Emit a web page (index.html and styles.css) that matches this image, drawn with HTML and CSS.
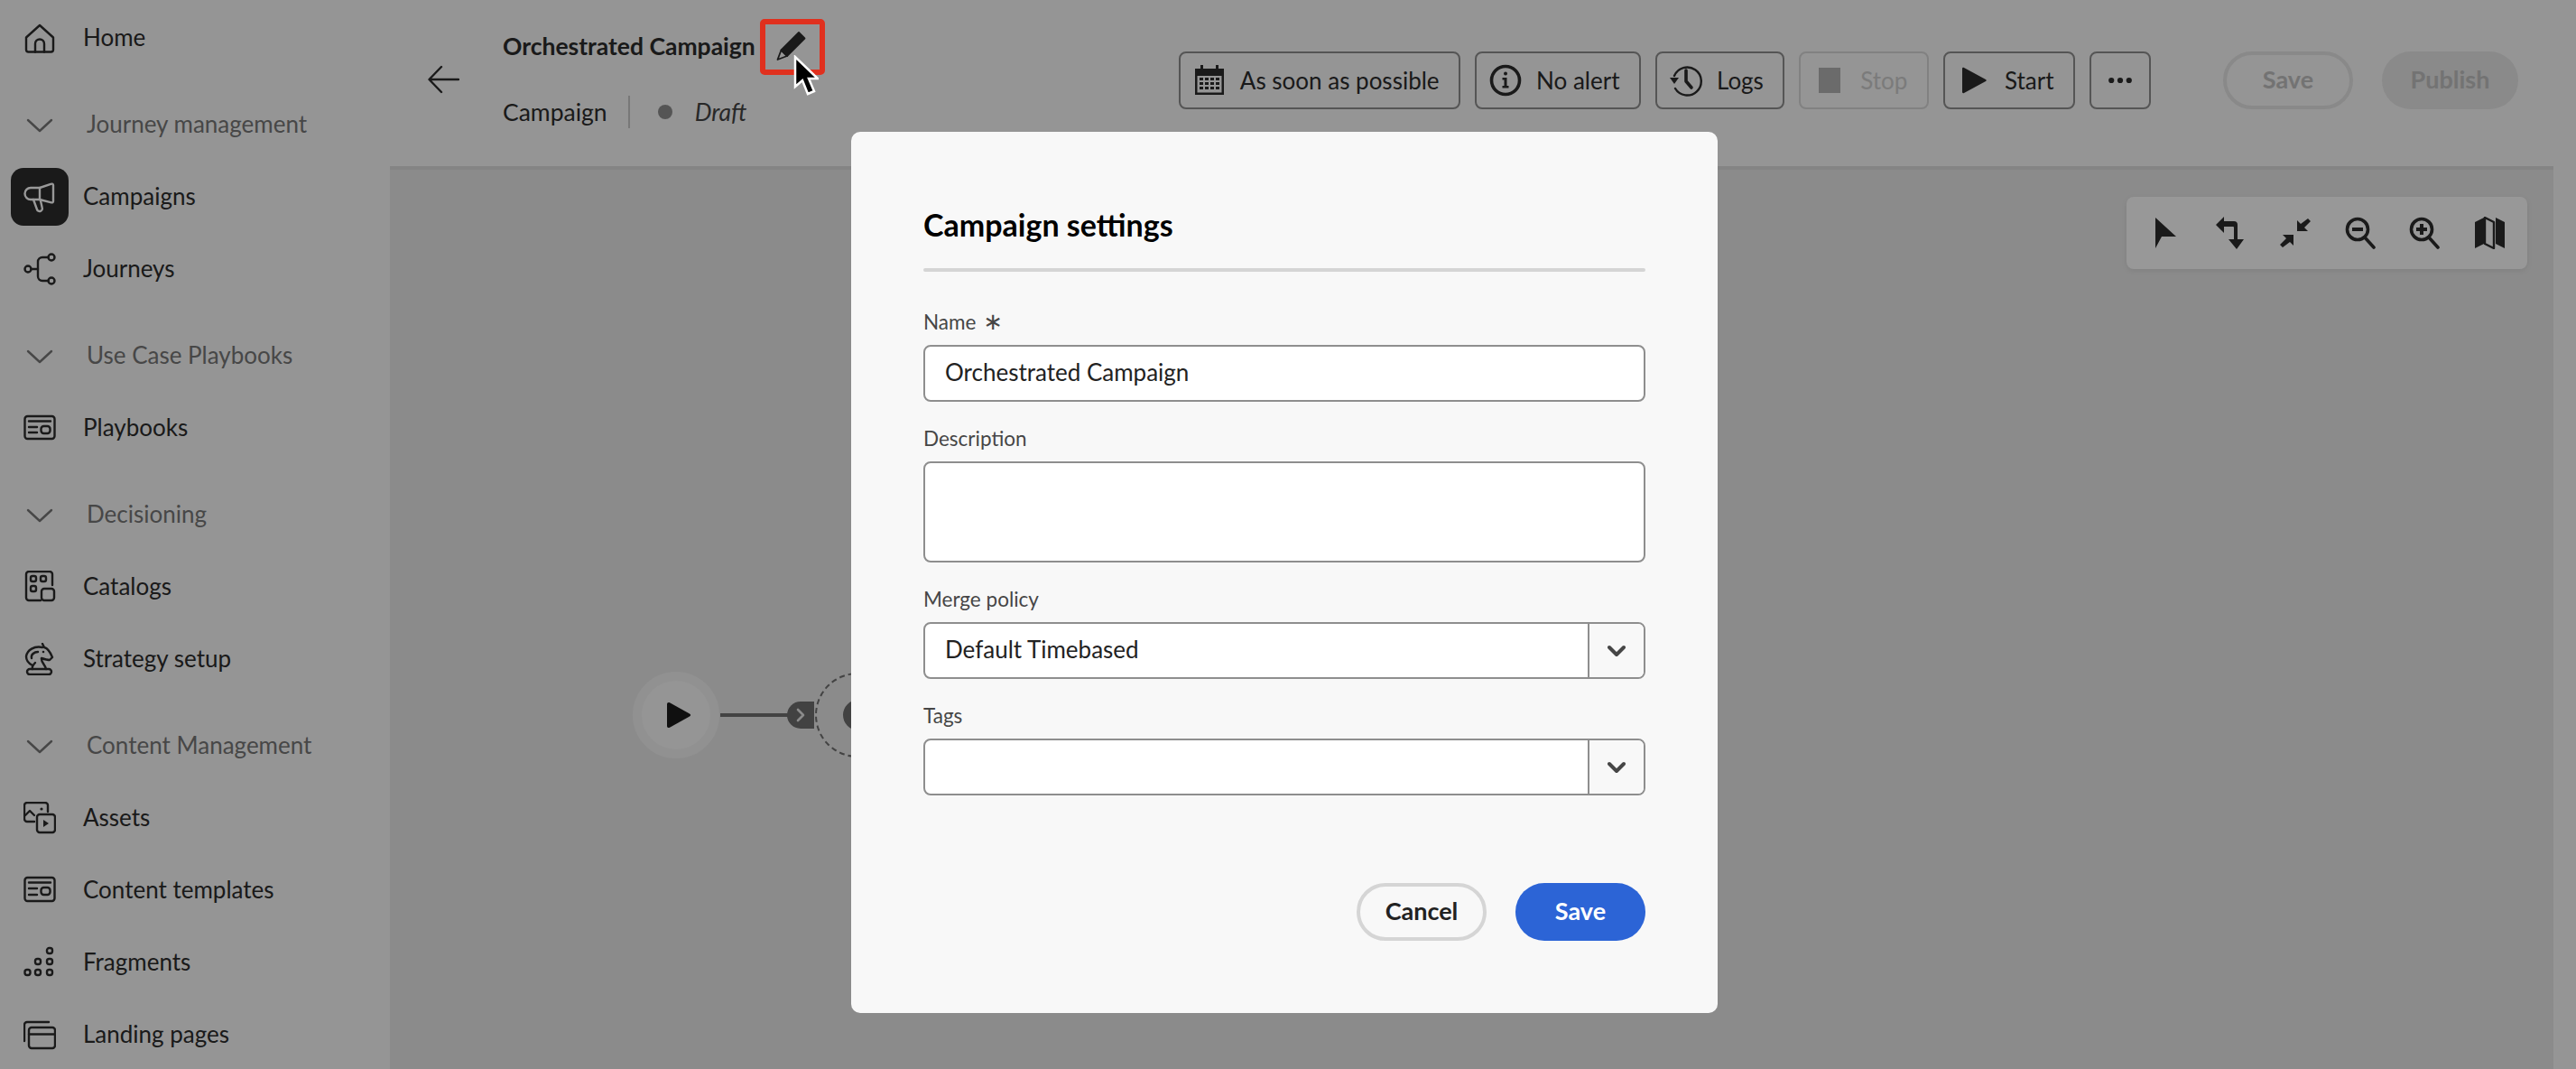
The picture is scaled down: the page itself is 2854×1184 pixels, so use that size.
FILE: index.html
```html
<!DOCTYPE html>
<html lang="en">
<head>
  <meta charset="UTF-8" />
  <meta name="viewport" content="width=device-width, initial-scale=1.0" />
  <title>Campaign settings</title>
  <link rel="stylesheet" href="styles.css">
</head>
<body>
  <div class="app">
    <nav class="sidebar">
      <a class="nav-item">
        <span class="nav-icon"><svg viewBox="0 0 36 36"><path d="M3 17.500 18 4l15 13.500V31a2.500 2.500 0 0 1-2.500 2.500h-25A2.500 2.500 0 0 1 3 31Z"/><path d="M13 33.500V24.500a5 5 0 0 1 10 0v9"/></svg></span>
        <span class="nav-label">Home</span>
      </a>

      <div class="nav-heading">
        <span class="nav-icon"><svg viewBox="0 0 36 36"><path d="M5 13l13 12 13-12"/></svg></span>
        <span class="nav-label">Journey management</span>
      </div>
      <a class="nav-item active">
        <span class="nav-icon"><svg viewBox="0 0 36 36"><path d="M33 5v18a1.500 1.500 0 0 1-2 1.300L18 21H8a6.500 6.500 0 0 1 0-13h10l13-4.300A1.500 1.500 0 0 1 33 5Z"/><path d="M18 8v13"/><path d="M11 21l4 11a3 3 0 0 0 5.700-2l-1.900-8.500"/></svg></span>
        <span class="nav-label">Campaigns</span>
      </a>
      <a class="nav-item">
        <span class="nav-icon"><svg viewBox="0 0 36 36"><circle cx="5" cy="18" r="3.500"/><circle cx="31" cy="5" r="3.500"/><circle cx="31" cy="31" r="3.500"/><path d="M8.500 18H16"/><path d="M27.500 5H21a5 5 0 0 0-5 5v16a5 5 0 0 0 5 5h6.500"/></svg></span>
        <span class="nav-label">Journeys</span>
      </a>

      <div class="nav-heading">
        <span class="nav-icon"><svg viewBox="0 0 36 36"><path d="M5 13l13 12 13-12"/></svg></span>
        <span class="nav-label">Use Case Playbooks</span>
      </div>
      <a class="nav-item">
        <span class="nav-icon"><svg viewBox="0 0 36 36"><rect x="1.500" y="5" width="33" height="25" rx="3"/><path d="M6 10.500h24M6 17h9M6 23h9"/><rect x="19.500" y="16" width="10" height="8" rx="3"/></svg></span>
        <span class="nav-label">Playbooks</span>
      </a>

      <div class="nav-heading">
        <span class="nav-icon"><svg viewBox="0 0 36 36"><path d="M5 13l13 12 13-12"/></svg></span>
        <span class="nav-label">Decisioning</span>
      </div>
      <a class="nav-item">
        <span class="nav-icon"><svg viewBox="0 0 36 36"><path d="M19 33H6a3 3 0 0 1-3-3V4a3 3 0 0 1 3-3h23a3 3 0 0 1 3 3v12"/><rect x="8" y="6" width="6" height="6" rx="2"/><rect x="19" y="6" width="6" height="6" rx="2"/><rect x="8" y="17" width="6" height="6" rx="2"/><rect x="20" y="20" width="14" height="13" rx="3"/></svg></span>
        <span class="nav-label">Catalogs</span>
      </a>
      <a class="nav-item">
        <span class="nav-icon"><svg viewBox="0 0 36 36"><path d="M7 29h21a3 3 0 0 1 0 6H7a3 3 0 0 1 0-6Z"/><path d="M21 1l2 4c4 1 7 6 9 11l-3 3c-3 0-6-1-9-2-1 4 4 7 5 12"/><path d="M21 5C12 3 4 8 3 15c0 5 3 8 7 10"/><path d="M10 29c-1-3 1-5 3-7"/><path d="M9 17c-1-4 3-7 7-7"/><circle cx="22" cy="10" r="1.300" class="solid"/></svg></span>
        <span class="nav-label">Strategy setup</span>
      </a>

      <div class="nav-heading">
        <span class="nav-icon"><svg viewBox="0 0 36 36"><path d="M5 13l13 12 13-12"/></svg></span>
        <span class="nav-label">Content Management</span>
      </div>
      <a class="nav-item">
        <span class="nav-icon"><svg viewBox="0 0 36 36"><path d="M27 11V4a3 3 0 0 0-3-3H4a3 3 0 0 0-3 3v15a3 3 0 0 0 3 3h8"/><path d="M2 15l5-5 5 5"/><circle cx="20" cy="8" r="1.600" class="solid"/><rect x="15" y="14" width="20" height="20" rx="3"/><path d="M22 20v8l6-4Z" class="solid"/></svg></span>
        <span class="nav-label">Assets</span>
      </a>
      <a class="nav-item">
        <span class="nav-icon"><svg viewBox="0 0 36 36"><rect x="1.500" y="4" width="33" height="26" rx="3"/><path d="M6 9.500h24M6 16h9M6 23h9"/><rect x="19.500" y="15" width="10" height="8" rx="3"/></svg></span>
        <span class="nav-label">Content templates</span>
      </a>
      <a class="nav-item">
        <span class="nav-icon"><svg viewBox="0 0 36 36"><rect x="1.500" y="26" width="6" height="6" rx="2.500"/><rect x="13" y="26" width="6" height="6" rx="2.500"/><rect x="26" y="26" width="6" height="6" rx="2.500"/><rect x="13" y="14" width="6" height="6" rx="2.500"/><rect x="26" y="14" width="6" height="6" rx="2.500"/><rect x="26" y="2" width="6" height="6" rx="2.500"/></svg></span>
        <span class="nav-label">Fragments</span>
      </a>
      <a class="nav-item">
        <span class="nav-icon"><svg viewBox="0 0 36 36"><path d="M1 25V7a3 3 0 0 1 3-3h24"/><rect x="6" y="10" width="29" height="23" rx="3"/><path d="M6 17.500h29"/></svg></span>
        <span class="nav-label">Landing pages</span>
      </a>
    </nav>

    <main class="main">
      <header class="topbar">
        <button class="back-btn">
          <svg viewBox="0 0 36 36"><path d="M35 18H3M16 4 2.500 18 16 32"/></svg>
        </button>
        <div class="title-block">
          <div class="title-row">
            <span class="title">Orchestrated Campaign</span>
            <svg class="pencil" viewBox="0 0 34 34"><path class="pencil-body" d="M26 2 32.500 8.500 13 28 6.500 21.500Z"/><path d="M6.500 21.500 13 28 2.500 32Z"/></svg>
          </div>
          <div class="subtitle">
            <span>Campaign</span>
            <span class="sep"></span>
            <span class="status-dot"></span>
            <em>Draft</em>
          </div>
        </div>

        <div class="actions">
          <button class="tool-btn">
            <svg viewBox="0 0 36 36"><path class="solid" d="M2 5h32v29H2Zm2.500 8v18.500h27V13Z"/><path class="solid" d="M8 1h3v7H8Zm17 0h3v7h-3ZM7 15h4v3H7Zm6 0h4v3h-4Zm6 0h4v3h-4Zm6 0h4v3h-4ZM7 20h4v3H7Zm6 0h4v3h-4Zm6 0h4v3h-4Zm6 0h4v3h-4ZM7 25h4v3H7Zm6 0h4v3h-4Zm6 0h4v3h-4Zm6 0h4v3h-4Z"/></svg>
            As soon as possible
          </button>
          <button class="tool-btn">
            <svg viewBox="0 0 36 36"><circle class="thick" cx="18" cy="18" r="15.500"/><circle class="solid" cx="18" cy="10.500" r="2"/><path class="solid" d="M14.500 15h5v9h2v2.500h-7V24h2v-6.500h-2Z"/></svg>
            No alert
          </button>
          <button class="tool-btn">
            <svg viewBox="0 0 36 36"><path d="M5 13A15.500 15.500 0 1 1 6 27"/><path class="solid" d="M0 15h10l-5 7Z"/><path class="thick" d="M18 7v12l6 7"/></svg>
            Logs
          </button>
          <button class="tool-btn disabled">
            <svg viewBox="0 0 36 36"><rect class="solid" x="6" y="4" width="24" height="28"/></svg>
            Stop
          </button>
          <button class="tool-btn">
            <svg viewBox="0 0 36 36"><path class="solid" d="M5 5c0-1 1-1.500 2-1L31 17c1 .5 1 1.500 0 2L7 32c-1 .5-2 0-2-1Z"/></svg>
            Start
          </button>
          <button class="tool-btn more">
            <svg viewBox="0 0 36 36"><circle class="solid" cx="7" cy="18" r="3.500"/><circle class="solid" cx="18" cy="18" r="3.500"/><circle class="solid" cx="29" cy="18" r="3.500"/></svg>
          </button>
          <button class="pill ghost">Save</button>
          <button class="pill filled">Publish</button>
        </div>
      </header>

      <section class="canvas">
        <div class="zoom-tools">
          <svg viewBox="0 0 36 36"><path class="solid" d="M6 1v34l7-13h16Z"/></svg>
          <svg viewBox="0 0 36 36"><path class="solid" d="M1 9 10 0v5h11a4 4 0 0 1 4 4v16h7L24 36l-9-11h6V12a1 1 0 0 0-1-1H10v7Z"/></svg>
          <svg viewBox="0 0 36 36"><path class="solid" d="M32 2l3 3-7 7 4 4H20V4l4 4ZM4 34l-3-3 7-7-4-4h12v12l-4-4Z"/></svg>
          <svg viewBox="0 0 36 36"><circle class="thick" cx="15" cy="14" r="11.500"/><path class="solid" d="M9 12h12v4H9Z"/><path class="thick" d="M23 23l10 11"/></svg>
          <svg viewBox="0 0 36 36"><circle class="thick" cx="15" cy="14" r="11.500"/><path class="solid" d="M13 8h4v4h4v4h-4v4h-4v-4H9v-4h4Z"/><path class="thick" d="M23 23l10 11"/></svg>
          <svg viewBox="0 0 36 36"><path class="solid" d="M2 6l10-5v29L2 35Zm23-5 10 5v29l-10-5Z"/><path d="M13 1l10 5v29L13 30Z"/></svg>
        </div>

        <div class="node-start">
          <svg viewBox="0 0 28 30"><path d="M1 3c0-2 1.500-2.500 3-1.800L26 13.500c1.500 1 1.500 2 0 3L4 28.800C2.500 29.500 1 29 1 27Z"/></svg>
        </div>
        <div class="node-line"></div>
        <div class="node-port">
          <svg viewBox="0 0 12 16"><path d="M3 2l6 6-6 6"/></svg>
        </div>
        <div class="node-empty"><span class="node-add"></span></div>
      </section>
    </main>
  </div>

  <div class="underlay">
    <div class="dialog">
      <h2 class="dialog-title">Campaign settings</h2>
      <hr class="dialog-rule">

      <form class="dialog-form">
        <label class="field">
          <span class="field-label">Name <span class="req">∗</span></span>
          <input type="text" value="Orchestrated Campaign">
        </label>
        <label class="field">
          <span class="field-label">Description</span>
          <textarea></textarea>
        </label>
        <label class="field">
          <span class="field-label">Merge policy</span>
          <span class="combo">
            <span class="combo-value">Default Timebased</span>
            <span class="combo-btn"><svg viewBox="0 0 20 14"><path d="M2 3l8 8 8-8"/></svg></span>
          </span>
        </label>
        <label class="field">
          <span class="field-label">Tags</span>
          <span class="combo">
            <span class="combo-value"></span>
            <span class="combo-btn"><svg viewBox="0 0 20 14"><path d="M2 3l8 8 8-8"/></svg></span>
          </span>
        </label>
      </form>

      <div class="dialog-actions">
        <button class="dlg-btn cancel">Cancel</button>
        <button class="dlg-btn save">Save</button>
      </div>
    </div>
  </div>

  <!-- callout drawn on top of the dimmed page -->
  <div class="callout"></div>
  <svg class="cursor" viewBox="0 0 28 46"><path d="M2 2v33l8-7 6 15 7-3-6-14h10Z"/></svg>
</body>
</html>
```

FILE: styles.css
```css
* {
  box-sizing: border-box;
}
html, body {
  margin: 0;
  height: 1184px;
  overflow: hidden;
}
body {
  font-family: 'Lato', 'Noto Sans', sans-serif;
  background: #f8f8f8;
  color: #2c2c2c;
}
svg {
  fill: none;
  stroke: currentColor;
  stroke-width: 2.4;
  stroke-linecap: round;
  stroke-linejoin: round;
}
svg .solid {
  fill: currentColor;
  stroke: none;
}
svg .thick {
  stroke-width: 3.6;
}
button {
  font-family: inherit;
  color: inherit;
  background: none;
  cursor: pointer;
}

.app {
  display: flex;
  height: 1184px;
}

/* left nav */
.sidebar {
  width: 432px;
  flex: none;
  padding-top: 2px;
}
.nav-item, .nav-heading {
  display: flex;
  align-items: center;
  height: 80px;
  padding-left: 12px;
  gap: 16px;
  font-size: 26px;
}
.nav-heading {
  margin-top: 16px;
  gap: 20px;
  color: #777;
}
.nav-label {
  margin-top: -3px;
}
.nav-icon {
  width: 64px;
  height: 64px;
  flex: none;
  display: flex;
  align-items: center;
  justify-content: center;
  border-radius: 14px;
}
.nav-icon svg {
  width: 36px;
  height: 36px;
}
.active .nav-icon {
  background: #2c2c2c;
  color: #fff;
}

/* header + canvas */
.main {
  flex: 1;
  min-width: 0;
  margin-right: 25px;
  display: flex;
  flex-direction: column;
}
.topbar {
  height: 188px;
  flex: none;
  display: flex;
  border-bottom: 4px solid #dcdcdc;
}
.back-btn {
  width: 36px;
  height: 36px;
  margin: 70px 0 0 41px;
  padding: 0;
  border: 0;
}
.back-btn svg {
  width: 36px;
  height: 36px;
}
.title-block {
  margin-left: 48px;
}
.title-row {
  display: flex;
  align-items: center;
  height: 34px;
  margin-top: 34px;
}
.title {
  font-size: 26.500px;
  font-weight: 700;
}
.pencil {
  width: 34px;
  height: 34px;
  margin-left: 22px;
  stroke-width: 1.800;
}
.pencil .pencil-body {
  fill: #2c2c2c;
}
.subtitle {
  display: flex;
  align-items: center;
  margin-top: 38px;
  height: 36px;
  font-size: 26.500px;
}
.sep {
  width: 2px;
  height: 36px;
  margin: 0 31px 0 23px;
  background: #c8c8c8;
}
.status-dot {
  width: 16px;
  height: 16px;
  border-radius: 50%;
  background: #8e8e8e;
  margin-right: 25px;
}
.subtitle em {
  color: #444;
}
.actions {
  display: flex;
  gap: 16px;
  margin-left: auto;
  margin-top: 57px;
  align-items: flex-start;
  padding-right: 39px;
}
.tool-btn {
  display: flex;
  align-items: center;
  height: 64px;
  padding: 0 21.500px 0 14px;
  gap: 16px;
  font-size: 26px;
  border: 2px solid #8e8e8e;
  border-radius: 8px;
  white-space: nowrap;
}
.tool-btn svg {
  width: 36px;
  height: 36px;
}
.tool-btn.disabled {
  color: #cdcdcd;
  border-color: #d8d8d8;
}
.tool-btn.disabled svg {
  color: #b3b3b3;
}
.tool-btn.more {
  width: 68px;
  padding: 0;
  justify-content: center;
}
.tool-btn.more svg {
  width: 32px;
  height: 32px;
}
.pill {
  height: 64px;
  padding: 0 0 3px;
  border-radius: 32px;
  font-size: 27px;
  font-weight: 700;
  color: #c0c0c0;
}
.pill.ghost {
  width: 144px;
  margin-left: 64px;
  border: 4px solid #e4e4e4;
}
.pill.filled {
  width: 151px;
  margin-left: 16px;
  border: 0;
  background: #e6e6e6;
}

.canvas {
  flex: 1;
  position: relative;
  background: #e8e8e8;
}
.zoom-tools {
  position: absolute;
  top: 30px;
  right: 29px;
  width: 444px;
  height: 80px;
  padding: 0 24px 0 26px;
  display: flex;
  align-items: center;
  justify-content: space-between;
  background: #fdfdfd;
  border-radius: 8px;
  box-shadow: 0 2px 6px rgba(0,0,0,0.08);
}
.zoom-tools svg {
  width: 36px;
  height: 36px;
}

/* nodes sit on the canvas at free positions */
.node-start {
  position: absolute;
  left: 269px;
  top: 556px;
  width: 96px;
  height: 96px;
  border-radius: 50%;
  background: #f8f8f8;
  border: 10px solid #f2f2f2;
  display: flex;
  align-items: center;
  justify-content: center;
}
.node-start svg {
  width: 28px;
  height: 30px;
  margin-left: 6px;
  fill: #1c1c1c;
  stroke: none;
}
.node-line {
  position: absolute;
  left: 366px;
  top: 602px;
  width: 76px;
  height: 4px;
  background: #707070;
}
.node-port {
  position: absolute;
  left: 440px;
  top: 589px;
  width: 30px;
  height: 30px;
  border-radius: 15px 0 0 15px;
  background: #6e6e6e;
  color: #e8e8e8;
  display: flex;
  align-items: center;
  justify-content: center;
}
.node-port svg {
  width: 12px;
  height: 16px;
  stroke-width: 2.6;
}
.node-empty {
  position: absolute;
  left: 471px;
  top: 557px;
  width: 94px;
  height: 94px;
  border-radius: 50%;
  border: 2px dashed #707070;
}
.node-add {
  position: absolute;
  left: 29px;
  top: 28px;
  width: 34px;
  height: 34px;
  border-radius: 50%;
  background: #6e6e6e;
}

/* modal */
.underlay {
  position: fixed;
  inset: 0;
  background: rgba(0,0,0,0.4);
  display: flex;
  align-items: flex-start;
  padding: 146px 0 0 943px;
}
.dialog {
  width: 960px;
  height: 976px;
  padding: 80px;
  background: #f8f8f8;
  border-radius: 10px;
  display: flex;
  flex-direction: column;
}
.dialog-title {
  margin: 0;
  height: 46px;
  line-height: 46px;
  font-size: 34px;
  font-weight: 700;
  color: #000;
}
.dialog-rule {
  margin: 25px 0 0;
  height: 4px;
  border: 0;
  border-radius: 2px;
  background: #d5d5d5;
}
.dialog-form {
  margin-top: 41px;
  display: flex;
  flex-direction: column;
  gap: 26px;
}
.field {
  display: flex;
  flex-direction: column;
  gap: 6px;
}
.field-label {
  height: 34px;
  line-height: 30px;
  font-size: 22.500px;
  color: #464646;
}
.req {
  margin-left: 2px;
  font-family: 'DejaVu Sans', sans-serif;
  font-size: 26px;
  line-height: 24px;
}
.field input, .field textarea, .combo {
  display: flex;
  width: 100%;
  height: 63px;
  font-family: inherit;
  font-size: 26px;
  color: #222;
  background: #fff;
  border: 2px solid #8e8e8e;
  border-radius: 8px;
  outline: none;
}
.field input {
  padding: 0 22px 3px;
}
.field textarea {
  height: 112px;
  resize: none;
}
.combo-value {
  flex: 1;
  display: flex;
  align-items: center;
  padding: 0 22px 3px;
}
.combo-btn {
  width: 62px;
  flex: none;
  display: flex;
  align-items: center;
  justify-content: center;
  border-left: 2px solid #8e8e8e;
  background: #f8f8f8;
  border-radius: 0 6px 6px 0;
  color: #464646;
}
.combo-btn svg {
  width: 20px;
  height: 14px;
  stroke-width: 4;
}
.dialog-actions {
  margin-top: auto;
  display: flex;
  justify-content: flex-end;
  gap: 32px;
}
.dlg-btn {
  width: 144px;
  height: 64px;
  padding: 0 0 3px;
  border-radius: 32px;
  font-size: 27px;
  font-weight: 700;
  border: 0;
}
.dlg-btn.cancel {
  border: 4px solid #d5d5d5;
  color: #222;
}
.dlg-btn.save {
  background: #2c64d6;
  color: #fff;
}

/* annotation on the screenshot */
.callout {
  position: fixed;
  left: 842px;
  top: 21px;
  width: 72px;
  height: 62px;
  border: 6px solid #e0301e;
  border-radius: 5px;
}
.cursor {
  position: fixed;
  left: 879px;
  top: 61px;
  width: 28px;
  height: 46px;
  fill: #000;
  stroke: #fff;
  stroke-width: 2.5;
  stroke-linejoin: miter;
}
```
